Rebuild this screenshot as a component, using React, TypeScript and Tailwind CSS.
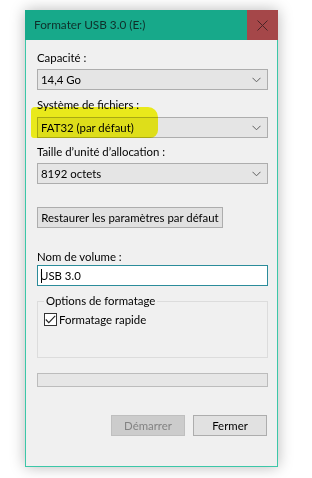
import type { ReactNode } from "react";

const font = { fontFamily: 'Lato, "Noto Sans", "Liberation Sans", sans-serif' };

function Chevron() {
  return (
    <svg width="9" height="6" viewBox="0 0 9 6" className="shrink-0">
      <path d="M0.5 0.8 L4.5 4.8 L8.5 0.8" fill="none" stroke="#5f5f5f" strokeWidth="1" />
    </svg>
  );
}

function Combo({ value }: { value: string }) {
  return (
    <div className="flex h-[21px] w-[231px] items-center justify-between border border-[#adadad] bg-[#e5e5e5] pl-[3px] pr-[6px] text-[11.4px] text-black">
      <span className="whitespace-nowrap">{value}</span>
      <Chevron />
    </div>
  );
}

function Label({ children, className = "" }: { children: ReactNode; className?: string }) {
  return (
    <div className={`h-[16px] whitespace-nowrap text-[11.4px] leading-[16px] text-black ${className}`}>{children}</div>
  );
}

export default function App() {
  return (
    <div className="h-[478px] w-[312px] bg-white pl-[25px] pt-[10px]" style={font}>
      <div className="relative flex h-[457px] w-[253px] flex-col shadow-[0_0_14px_rgba(0,0,0,0.28)]">
        {/* title bar */}
        <div className="flex h-[30px] items-center bg-[#17a98a]">
          <span className="ml-[9px] flex-1 whitespace-nowrap text-[11.8px] text-[#0f2f2a]">Formater USB 3.0 (E:)</span>
          <div className="flex h-[30px] w-[31px] items-center justify-center bg-[#a54749]">
            <svg width="11" height="11" viewBox="0 0 11 11">
              <path d="M0.5 0.5 L10.5 10.5 M10.5 0.5 L0.5 10.5" stroke="#4a2426" strokeWidth="1" fill="none" />
            </svg>
          </div>
        </div>

        {/* body */}
        <div className="flex flex-1 flex-col border-x border-b border-[#3cc7a8] bg-[#f0f0f0] pl-[11px]">
          <Label className="mt-[10px]">Capacité :</Label>
          <div className="mt-[3px]">
            <Combo value="14,4 Go" />
          </div>
          <Label className="mt-[7px]">Système de fichiers :</Label>
          <div className="mt-[4px]">
            <Combo value="FAT32 (par défaut)" />
          </div>
          <Label className="mt-[6px]">Taille d’unité d’allocation :</Label>
          <div className="mt-[3px]">
            <Combo value="8192 octets" />
          </div>

          <button
            type="button"
            className="mt-[23px] h-[21px] w-[186px] whitespace-nowrap border border-[#adadad] bg-[#e1e1e1] text-[11.4px] text-black"
          >
            Restaurer les paramètres par défaut
          </button>

          <Label className="mt-[21px]">Nom de volume :</Label>
          <div className="flex h-[21px] w-[231px] items-center border border-[#2b8c9a] bg-white pl-[3px] text-[11.4px] text-black">
            <span className="mr-[-2px] h-[14px] w-px bg-black" />
            <span>USB 3.0</span>
          </div>

          <fieldset className="mt-[8px] h-[64px] w-[231px] border border-[#dcdcdc] pl-[6px]">
            <legend className="px-[2px] text-[11.4px] leading-[14px] text-black">Options de formatage</legend>
            <div className="mt-[3px] flex items-center gap-[2px]">
              <div className="flex h-[13px] w-[13px] items-center justify-center border border-[#333] bg-white">
                <svg width="11" height="9" viewBox="0 0 11 9">
                  <path d="M0.8 4.5 L3.8 7.6 L10.2 0.8" fill="none" stroke="#222" strokeWidth="1.1" />
                </svg>
              </div>
              <span className="whitespace-nowrap text-[11.4px] text-black">Formatage rapide</span>
            </div>
          </fieldset>

          <div className="mt-[15px] h-[14px] w-[231px] border border-[#bcbcbc] bg-[#e6e6e6]" />

          <div className="mt-[28px] flex gap-[8px] pl-[74px]">
            <button
              type="button"
              className="h-[21px] w-[74px] border border-[#bfbfbf] bg-[#cccccc] text-[11.4px] text-[#838383]"
            >
              Démarrer
            </button>
            <button
              type="button"
              className="h-[21px] w-[74px] border border-[#adadad] bg-[#e1e1e1] text-[11.4px] text-black"
            >
              Fermer
            </button>
          </div>
        </div>

        {/* highlighter marker over file system */}
        <div className="pointer-events-none absolute left-[6px] top-[97px] h-[31px] w-[127px] rounded-[4px_10px_8px_3px] bg-[#f8f81c] mix-blend-multiply" />
      </div>
    </div>
  );
}
